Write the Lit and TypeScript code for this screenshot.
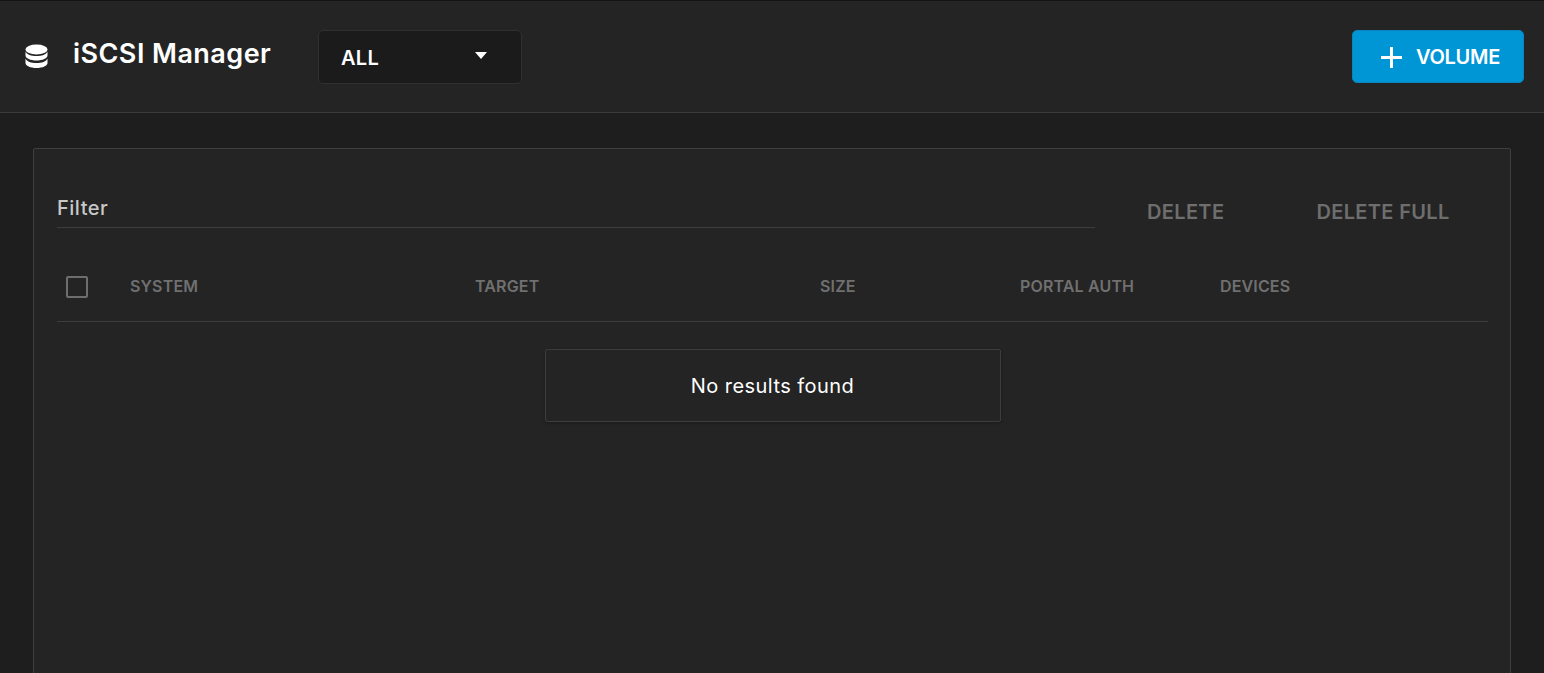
import { LitElement, html, css } from "lit";
import { customElement } from "lit/decorators.js";

@customElement("app-root")
export class AppRoot extends LitElement {
  static styles = css`
    :host { display: block; height: 673px; overflow: hidden; background: #1e1e1e; font-family: "Inter", "Noto Sans", sans-serif; color: #fff; }
    .top { height: 111px; box-sizing: content-box; background: #242424; border-top: 1px solid #141414; border-bottom: 1px solid #3a3a3a; display: flex; align-items: center; padding: 0 20px 0 25px; }
    .icon { width: 23px; height: 25px; display: block; margin-right: 25px; }
    h1 { margin: 0 47px 0 0; font-size: 27px; font-weight: 600; line-height: 32px; width: 198px; white-space: nowrap; letter-spacing: 0.45px; position: relative; top: -3px; }
    .select { width: 204px; height: 54px; box-sizing: border-box; background: #1b1b1b; border: 1px solid #303030; border-radius: 5px; display: flex; align-items: center; justify-content: space-between; padding: 2px 34px 0 22px; font-size: 20px; font-weight: 600; letter-spacing: 0.3px; }
    .select span { width: 0; height: 0; border: 6.5px solid transparent; border-top: 7px solid #fff; border-bottom: 0; margin-top: -4px; }
    .spacer { flex: 1; }
    .add { width: 172px; height: 53px; box-sizing: border-box; background: #0095d5; border: 1px solid #0a84ba; border-radius: 5px; display: flex; align-items: center; gap: 14px; padding: 1px 0 0 28px; font-size: 20px; font-weight: 600; letter-spacing: -0.3px; }
    .add svg { width: 21px; height: 21px; display: block; }
    .card { margin: 35px 33px 0; height: 600px; box-sizing: border-box; background: #242424; border: 1px solid #3f3f3f; border-radius: 2px; padding: 0 22px 0 23px; }
    .filters { height: 79px; display: flex; }
    .filter { flex: none; width: 1038px; height: 79px; box-sizing: border-box; border-bottom: 1px solid #3d3d3d; font-size: 20px; font-weight: 500; letter-spacing: 0.5px; color: #c8c8c8; padding-top: 46px; line-height: 26px; }
    .action { font-size: 20px; font-weight: 600; color: #6e6e6e; line-height: 24px; padding-top: 51px; white-space: nowrap; letter-spacing: 0.35px; }
    .a1 { margin-left: 52px; }
    .a2 { margin-left: 92px; }
    .head { height: 94px; box-sizing: border-box; border-bottom: 1px solid #3d3d3d; display: grid; grid-template-columns: 73px 345px 345px 200px 200px 1fr; align-items: center; font-size: 16px; font-weight: 600; color: #707070; padding-top: 24px; white-space: nowrap; letter-spacing: 0.15px; }
    .label { margin-bottom: 2px; }
    .check { width: 22px; height: 22px; margin-left: 9px; box-sizing: border-box; border: 2px solid #6e6e6e; border-radius: 2px; }
    .empty { width: 456px; height: 73px; box-sizing: border-box; margin: 27px auto 0; border: 1px solid #3d3d3d; border-radius: 2px; box-shadow: 0 1px 3px rgba(0,0,0,.3); display: flex; align-items: center; justify-content: center; font-size: 20px; font-weight: 400; letter-spacing: 0.45px; }
  `;

  render() {
    return html`
      <div class="top">
        <svg class="icon" viewBox="0 0 23 25" fill="#fff">
          <ellipse cx="11.5" cy="5.5" rx="11" ry="5"/>
          <path d="M.5 7.5v4c0 2.8 4.9 5 11 5s11-2.2 11-5v-4c-1.2 3-5.800 4.600-11 4.600S1.700 10.500.5 7.500z"/>
          <path d="M.5 14.500v4.500c0 2.800 4.900 5 11 5s11-2.200 11-5v-4.500c-1.200 3-5.800 4.600-11 4.600S1.700 17.500.5 14.500z"/>
        </svg>
        <h1>iSCSI Manager</h1>
        <div class="select">ALL<span></span></div>
        <div class="spacer"></div>
        <div class="add">
          <svg viewBox="0 0 21 21"><path d="M10.500 0v21M0 10.500h21" stroke="#fff" stroke-width="3"/></svg>
          VOLUME
        </div>
      </div>
      <div class="card">
        <div class="filters">
          <div class="filter">Filter</div>
          <div class="action a1">DELETE</div>
          <div class="action a2">DELETE FULL</div>
        </div>
        <div class="head">
          <div><div class="check"></div></div>
          <div class="label">SYSTEM</div><div class="label">TARGET</div><div class="label">SIZE</div><div class="label">PORTAL AUTH</div><div class="label">DEVICES</div>
        </div>
        <div class="empty">No results found</div>
      </div>
    `;
  }
}
